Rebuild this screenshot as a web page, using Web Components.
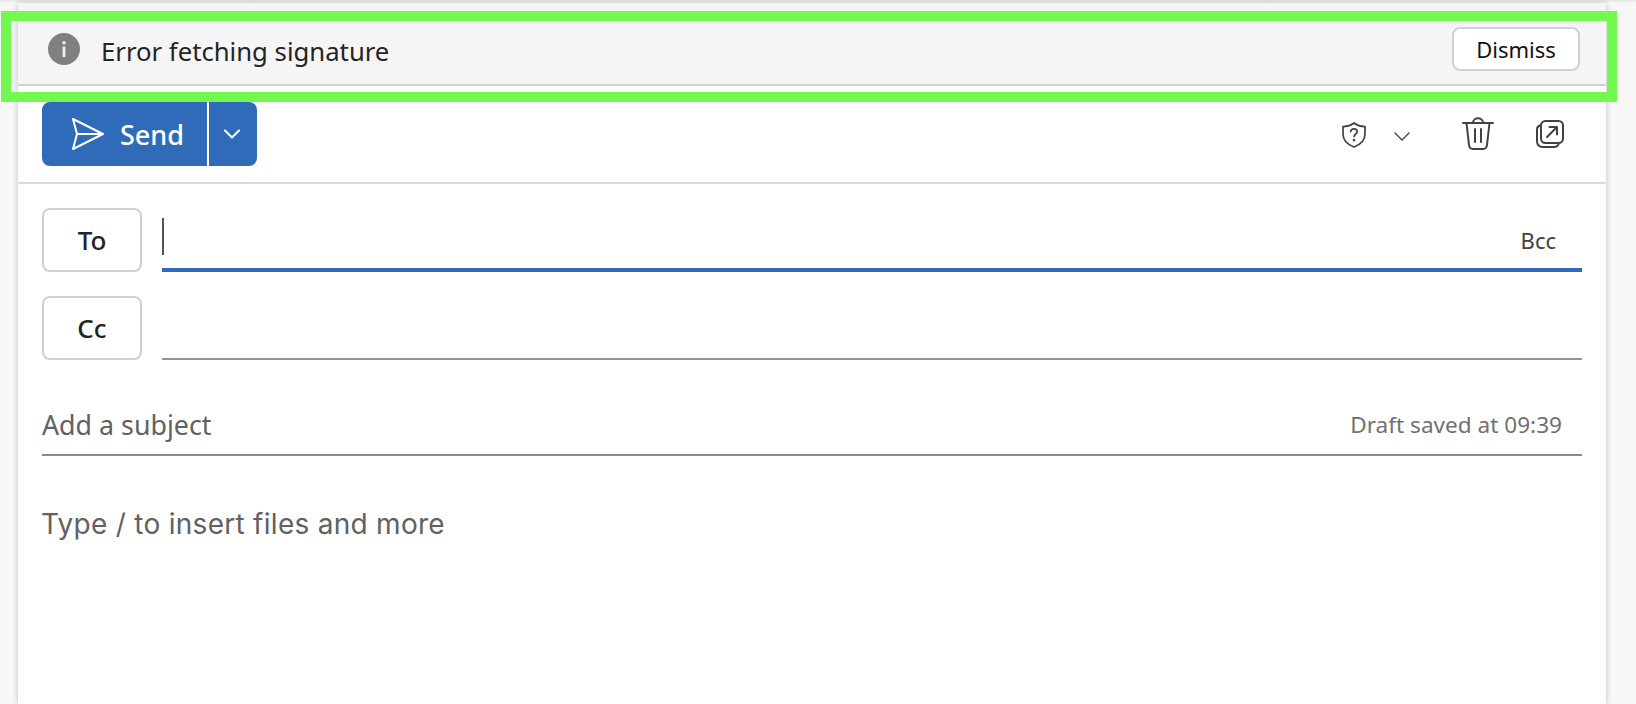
<!DOCTYPE html>
<html lang="en">
<head>
<meta charset="utf-8">
<title>Compose</title>
<style>
  html, body { margin: 0; height: 100%; background: #f5f5f5; overflow: hidden; }
  body { font-family: "Noto Sans", "Open Sans", sans-serif; color: #242424; }
</style>
</head>
<body>
<compose-window>
  <notice-bar>Error fetching signature</notice-bar>
  <send-toolbar></send-toolbar>
  <recipient-row label="To" active extra="Bcc"></recipient-row>
  <recipient-row label="Cc"></recipient-row>
  <subject-row placeholder="Add a subject" status="Draft saved at 09:39"></subject-row>
  <body-editor>Type / to insert files and more</body-editor>
</compose-window>
<highlight-frame></highlight-frame>

<script>
class ComposeWindow extends HTMLElement {
  constructor() {
    super();
    this.attachShadow({ mode: 'open' });
    this.shadowRoot.innerHTML = `
      <style>
        :host { display: block; height: 704px; box-sizing: border-box; padding: 3px 30px 0 18px; background: linear-gradient(#e4e4e4, #f7f7f7 3px); }
        .pane { height: 100%; background: #fff; box-shadow: 0 0 6px rgba(0, 0, 0, 0.22); }
      </style>
      <div class="pane"><slot></slot></div>
    `;
  }
}

class NoticeBar extends HTMLElement {
  constructor() {
    super();
    this.attachShadow({ mode: 'open' });
    this.shadowRoot.innerHTML = `
      <style>
        :host { display: flex; align-items: center; box-sizing: border-box; height: 83px; padding: 18px 26px 8px 30px; background: #f5f5f5; border-bottom: 2px solid #d1d1d1; }
        .icon { width: 32px; height: 32px; flex: none; }
        .text { flex: 1; margin-left: 21px; margin-top: 6px; font-size: 25.7px; line-height: 32px; }
        button { width: 128px; height: 44px; margin-top: 1px; padding: 0; font: inherit; font-size: 22px; color: #111; background: #fff; border: 2px solid #d1d1d1; border-radius: 8px; }
      </style>
      <svg class="icon" viewBox="0 0 32 32"><circle cx="16" cy="16" r="16" fill="#808080"/><rect x="14.6" y="13.5" width="2.8" height="10.5" fill="#eee"/><circle cx="16" cy="9.7" r="1.8" fill="#eee"/></svg>
      <span class="text"><slot></slot></span>
      <button>Dismiss</button>
    `;
  }
}

class SendToolbar extends HTMLElement {
  constructor() {
    super();
    this.attachShadow({ mode: 'open' });
    this.shadowRoot.innerHTML = `
      <style>
        :host { display: flex; align-items: flex-start; box-sizing: border-box; height: 98px; padding: 16px 42px 0 24px; border-bottom: 2px solid #d9d9d9; }
        .send { display: flex; width: 215px; height: 64px; border-radius: 8px; background: #2f6bb8; color: #fff; }
        .main { display: flex; align-items: center; width: 167px; box-sizing: border-box; padding-left: 30px; border-right: 2px solid #fff; font-size: 27px; font-weight: 500; }
        .main span { margin-left: 16px; }
        .more { flex: 1; display: flex; align-items: center; justify-content: center; padding-right: 2px; }
        .tools { margin-left: auto; display: flex; align-items: flex-start; padding-top: 15px; }
        svg { display: block; fill: none; stroke-linecap: round; stroke-linejoin: round; }
        .tools svg { stroke: #424242; }
        .shield { margin-top: 5px; }
        .caret { margin: 15px 0 0 28px; }
        .trash { margin-left: 52px; }
        .popout { margin: 3px 0 0 42px; }
      </style>
      <div class="send">
        <div class="main">
          <svg width="32" height="32" viewBox="0 0 32 32" stroke="#fff" stroke-width="2"><path d="M1 1 L31 16 L1 31 L5 16 Z M5 16 H31"/></svg>
          <span>Send</span>
        </div>
        <div class="more">
          <svg width="16" height="10" viewBox="0 0 16 10" stroke="#fff" stroke-width="2"><path d="M1 1.5 L8 8.5 L15 1.5"/></svg>
        </div>
      </div>
      <div class="tools">
        <svg class="shield" width="24" height="26" viewBox="0 0 24 26" stroke-width="1.7"><path d="M12 1 C15 3.4 19 4.4 23 4.6 V12 C23 18 19 22.4 12 25 C5 22.4 1 18 1 12 V4.6 C5 4.4 9 3.4 12 1 Z"/><path d="M8.7 9.7 C8.9 7.7 10.3 6.9 12 6.9 C13.9 6.9 15.2 8 15.2 9.7 C15.2 12 12.1 12 12.1 14.6"/><circle cx="12" cy="18.2" r="0.5"/></svg>
        <svg class="caret" width="16" height="9" viewBox="0 0 16 9" stroke-width="1.4"><path d="M1 1 L8 8 L15 1"/></svg>
        <svg class="trash" width="32" height="33" viewBox="0 0 32 33" stroke-width="2"><path d="M1 6 H31 M11 6 C11 -0.2 21 -0.2 21 6 M4.5 6 L7 28 C7.3 30.7 9 32 11 32 H21 C23 32 24.7 30.7 25 28 L27.5 6 M13 12 V25 M19 12 V25"/></svg>
        <svg class="popout" width="28" height="28" viewBox="0 0 28 28" stroke-width="2"><path d="M3.6 5.5 C1.8 6.4 1 7.6 1 9.5 V21 C1 24.8 3.2 27 7 27 H18.5 C20.4 27 21.6 26.2 22.5 24.4"/><rect x="5" y="1" width="22" height="22" rx="4.5"/><path d="M11 17 L21 7 M13.5 7 H21 V14.5"/></svg>
      </div>
    `;
  }
}

class RecipientRow extends HTMLElement {
  constructor() {
    super();
    this.attachShadow({ mode: 'open' });
  }

  connectedCallback() {
    const label = this.getAttribute('label') || '';
    const extra = this.getAttribute('extra') || '';
    const active = this.hasAttribute('active');
    this.shadowRoot.innerHTML = `
      <style>
        :host { display: flex; gap: 20px; height: 64px; margin: 24px 24px 0 24px; }
        button { width: 100px; height: 64px; box-sizing: border-box; padding: 0; font: inherit; font-size: 26px; font-weight: 500; color: #242424; background: #fff; border: 2px solid #d1d1d1; border-radius: 8px; }
        .field { flex: 1; display: flex; justify-content: space-between; box-sizing: border-box; border-bottom: ${active ? '4px solid #2f6bb8' : '2px solid #949494'}; }
        .caret { width: 2px; height: 37px; margin-top: 10px; background: #555; }
        .extra { margin: 19px 26px 0 0; font-size: 22px; line-height: 27px; color: #424242; }
      </style>
      <button>${label}</button>
      <div class="field">
        <span class="caret" style="visibility:${active ? 'visible' : 'hidden'}"></span>
        <span class="extra">${extra}</span>
      </div>
    `;
  }
}

class SubjectRow extends HTMLElement {
  constructor() {
    super();
    this.attachShadow({ mode: 'open' });
  }

  connectedCallback() {
    const placeholder = this.getAttribute('placeholder') || '';
    const status = this.getAttribute('status') || '';
    this.shadowRoot.innerHTML = `
      <style>
        :host { display: flex; align-items: center; justify-content: space-between; box-sizing: border-box; height: 96px; margin: 0 24px; padding: 34px 20px 0 0; border-bottom: 2px solid #8a8a8a; }
        .subject { font-size: 26.8px; color: #616161; }
        .status { font-size: 22.6px; color: #707070; }
      </style>
      <span class="subject">${placeholder}</span>
      <span class="status">${status}</span>
    `;
  }
}

class BodyEditor extends HTMLElement {
  constructor() {
    super();
    this.attachShadow({ mode: 'open' });
    this.shadowRoot.innerHTML = `
      <style>
        :host { display: block; padding: 49px 24px 0 23px; font-family: Inter, "Noto Sans", sans-serif; font-size: 28px; letter-spacing: 0.01em; line-height: 38px; color: #616161; }
      </style>
      <slot></slot>
    `;
  }
}

class HighlightFrame extends HTMLElement {
  constructor() {
    super();
    this.attachShadow({ mode: 'open' });
    this.shadowRoot.innerHTML = `
      <style>
        :host { position: absolute; left: 1px; top: 11px; width: 1616px; height: 91px; box-sizing: border-box; border: 10px solid #71f94f; }
      </style>
    `;
  }
}

customElements.define('compose-window', ComposeWindow);
customElements.define('notice-bar', NoticeBar);
customElements.define('send-toolbar', SendToolbar);
customElements.define('recipient-row', RecipientRow);
customElements.define('subject-row', SubjectRow);
customElements.define('body-editor', BodyEditor);
customElements.define('highlight-frame', HighlightFrame);
</script>
</body>
</html>
